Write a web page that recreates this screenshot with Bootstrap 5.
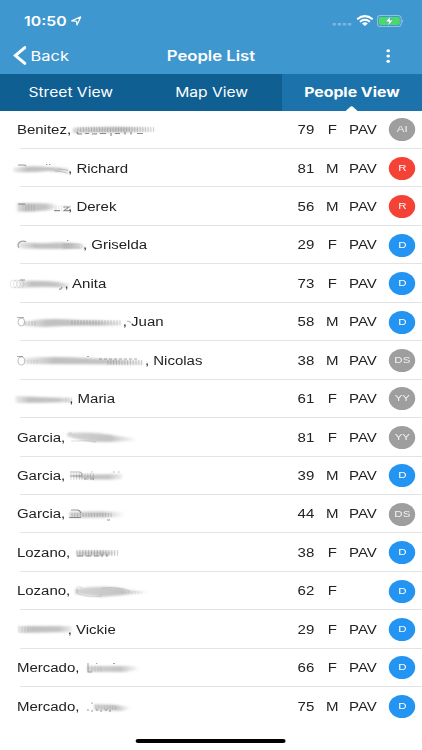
<!DOCTYPE html>
<html lang="en">
<head>
<meta charset="utf-8">
<meta name="viewport" content="width=device-width, initial-scale=1">
<title>People List</title>
<link href="https://cdn.jsdelivr.net/npm/bootstrap@5.3.0/dist/css/bootstrap.min.css" rel="stylesheet">
<style>
html, body { height: 750px; overflow: hidden; background: #fff; }
/* the whole screen is 1.2 times wider than its natural proportions */
.screen { width: 351.667px; height: 750px; transform: scaleX(1.2); transform-origin: 0 0; font-family: "Liberation Sans", Arial, sans-serif; color: #222; position: relative; }
.ui-font { font-family: Inter, "Liberation Sans", sans-serif; color: #fff; }
.top-area { background: #3f97cf; height: 74px; }
.status-bar { height: 37px; padding: 4px 14.6px 0 20px; }
.clock { font-size: 13.2px; font-weight: 600; line-height: 34px; }
.status-bar .locate { margin-left: 3.6px; }
.status-bar .wifi, .status-bar .battery { margin-left: 3.6px; }
.title-bar { height: 37px; display: grid; grid-template-columns: 1fr auto 1fr; }
.title-bar .back-link { font-size: 13.7px; padding-left: 10.5px; color: #fff; }
.title-bar .back-link span, .title-bar .heading { padding-top: 1px; }
.title-bar .heading { font-size: 13.9px; font-weight: 600; }
.title-bar .more { margin-right: 25.2px; }
.tabs-bar { height: 36.6px; background: #0f5f92; }
.tabs-bar .tab-item { flex: 1 1 0; font-size: 13px; color: #fff; line-height: 37.6px; text-align: center; position: relative; padding-left: .5px; }
.tabs-bar .tab-item.current { background: #1c72aa; font-weight: 700; font-size: 13.2px; padding-left: 0; }
.tab-item .pointer { position: absolute; left: 50%; bottom: 0; margin-left: -5px; width: 10px; height: 5px; display: block; }
.person { height: 38.45px; font-size: 12.5px; line-height: 37.4px; position: relative; padding-left: 14.1px; padding-right: 5.3px; }
.person::after { content: ""; position: absolute; left: 17px; right: 0; bottom: 0; height: 1px; background: #e3e3e5; }
.person:last-child::after { display: none; }
.person .who { white-space: pre; }
.person .who, .person .age, .person .sex, .person .vote { padding-top: 2px; }
.person .age { width: 20.2px; }
.person .sex { width: 17.6px; text-align: center; }
.person .vote { width: 33.4px; text-align: center; }
.party { width: 22.2px; height: 23px; border-radius: 50%; font-size: 9.6px; line-height: 22.4px; text-align: center; color: #fff; margin-left: 5px; }
.party-d { background: #2394f2; } .party-r { background: #f44336; } .party-n { background: #9e9e9e; color: #f2f2f2; }
.smudge { position: absolute; left: 0; top: 7.5px; width: 175px; height: 24px; }
.home-bar { position: absolute; left: 113.3px; top: 739px; width: 125px; height: 4px; border-radius: 3px; background: #000; }
</style>
<script src="https://cdn.jsdelivr.net/npm/bootstrap@5.3.0/dist/js/bootstrap.bundle.min.js"></script>
</head>
<body>
<svg width="0" height="0" class="position-absolute" aria-hidden="true">
<defs>
<linearGradient id="gMid"><stop offset="0" stop-color="#bbb" stop-opacity=".3"/><stop offset=".25" stop-color="#b5b5b5" stop-opacity=".85"/><stop offset=".75" stop-color="#b5b5b5" stop-opacity=".8"/><stop offset="1" stop-color="#bbb" stop-opacity=".25"/></linearGradient>
<linearGradient id="gOut"><stop offset="0" stop-color="#b0b0b0" stop-opacity=".55"/><stop offset=".6" stop-color="#aaa" stop-opacity=".7"/><stop offset="1" stop-color="#bbb" stop-opacity="0"/></linearGradient>
<filter id="soft" x="-10%" y="-50%" width="120%" height="200%"><feGaussianBlur stdDeviation=".9"/></filter>
<filter id="fine" x="-10%" y="-50%" width="120%" height="200%"><feGaussianBlur stdDeviation=".4"/></filter>
</defs>
</svg>
<div class="screen d-flex flex-column">
<header class="top-area ui-font">
<div class="status-bar d-flex align-items-center">
<span class="clock">10:50</span>
<svg class="locate" width="9.3" height="10" viewBox="0 0 12 11" preserveAspectRatio="none"><path d="M1 5.3L10.7 1 6.6 9.8 6.1 5.8Z" fill="none" stroke="#fff" stroke-width="1.3" stroke-linejoin="round"/></svg>
<svg class="ms-auto" width="16" height="14" viewBox="0 0 19 14" preserveAspectRatio="none"><g fill="#7db7df"><rect x="0" y="9" width="3.4" height="2.6" rx=".6"/><rect x="5.2" y="9" width="3.4" height="2.6" rx=".6"/><rect x="10.3" y="9" width="3.4" height="2.6" rx=".6"/><rect x="15.4" y="9" width="3.4" height="2.6" rx=".6"/></g></svg>
<svg class="wifi" width="14.2" height="11" viewBox="0 0 17 11" preserveAspectRatio="none"><g fill="none" stroke="#fff" stroke-width="2"><path d="M.7 4.2Q8.5-2 16.3 4.2"/><path d="M3.5 6.8Q8.5 2.8 13.5 6.8"/></g><path d="M5.6 8.4Q8.5 6.3 11.4 8.4L8.5 10.9Z" fill="#fff"/></svg>
<svg class="battery" width="22.7" height="12" viewBox="0 0 27 12" preserveAspectRatio="none"><rect x=".6" y=".6" width="23.6" height="10.8" rx="3" fill="none" stroke="#8fc2e4"/><rect x="2" y="2" width="20.8" height="8" rx="1.8" fill="#4cd964"/><path d="M25.3 4.2Q27 5.9 25.3 7.8Z" fill="#b8daef"/><path d="M13.6.9L8.4 6.8H11.7L10.8 11 16.4 5H13Z" fill="#fff" stroke="#3f97cf" stroke-width=".6"/></svg>
</div>
<div class="title-bar align-items-center">
<a href="#" class="back-link d-flex align-items-center text-decoration-none"><svg width="11" height="19" viewBox="0 0 13 19" preserveAspectRatio="none" class="me-1"><path d="M11.5 1.6L2 9.5l9.5 7.9" fill="none" stroke="#fff" stroke-width="3" stroke-linecap="round" stroke-linejoin="miter"/></svg><span>Back</span></a>
<span class="heading">People List</span>
<svg class="more ms-auto" width="5" height="14" viewBox="0 0 6 14" preserveAspectRatio="none"><g fill="#fff"><ellipse cx="3" cy="1.7" rx="1.8" ry="1.5"/><ellipse cx="3" cy="7" rx="1.8" ry="1.5"/><ellipse cx="3" cy="12.3" rx="1.8" ry="1.5"/></g></svg>
</div>
</header>
<nav class="tabs-bar ui-font d-flex">
<div class="tab-item">Street View</div>
<div class="tab-item">Map View</div>
<div class="tab-item current">People View<svg class="pointer" viewBox="0 0 12 5" preserveAspectRatio="none"><path d="M0 5L5 .6Q6-.2 7 .6L12 5Z" fill="#fff"/></svg></div>
</nav>
<main id="people"></main>
<div class="home-bar"></div>
</div>
<script>
// smudge artwork uses screen x and y measured from the middle of its row
const band = (d, g = 'gMid') => `<path d="${d}" fill="url(#${g})" filter="url(#soft)"/>`;
const ink = (d, o = .6, w = 1) => `<path d="${d}" fill="none" stroke="#333" stroke-opacity="${o * .85}" stroke-width="${w}" filter="url(#fine)"/>`;
const comb = (x0, x1, y0, y1, step, o = .35) => { let s = ''; for (let x = x0; x < x1; x += step) s += `M${x} ${y0}V${y1}`; return ink(s, o * .8, .9); };
const loops = (x0, x1, y, rx, ry, step, o) => { let s = ''; for (let x = x0; x < x1; x += step) s += `M${x} ${y}a${rx} ${ry} 0 1 0 ${2 * rx} 0a${rx} ${ry} 0 1 0 ${-2 * rx} 0`; return ink(s, o * .7, .8); };
const marks = {
 a: band('M73-2Q90-4 146-3L159 0 150 2Q110 3 73 3Z','gOut') + comb(78,155,-3,2,2.7,.35) + ink('M77 2q0 2 2 2h3M85 3.5h4M92 4h5M100 3.5h6M111 3v3M115 3.5h5M125 2v2.5M131 2v2.5M137 3.5h6',.65,1.2),
 b: band('M13-1Q30-4 48-2L68-1Q71 2 69 4L48 2Q30 4 14 3Z') + ink('M18-4h6q2 0 2 1.3M46-4.5h1.3M49-4.5h1.3',.6,1.1) + ink('M55 2q6 0 13 2.5M58 0q6 0 10 1.5',.25),
 c: band('M16-4Q40-4 54-3L56 2 50 3Q34 5 17 5Z') + ink('M18-3h7M54 3.6h6M63 0h6l-5 3.6h5',.6,1.1) + comb(56,70,-2,4,2.8,.2) + comb(20,36,-3,4,2.8,.12),
 d: band('M18-3Q40-1 57-2.5Q80-3 84 0L86 4Q55 4 19 3.5Z') + ink('M26-3.3q-4-2-7 1q-2 3 0 5M67-4.5h1.3',.6) + loops(62,80,1,1.8,2.5,2,.16),
 e: band('M19-3Q42-4 58-2L70 0 67 4Q45 2 20 4Z') + loops(10,20,0,3.5,4,3.4,.25) + ink('M20-4h5M59 5q2 1 3-2',.6),
 f: band('M23 0Q42-5 80-2L121-1 120 4Q70 3 43 5L24 4Z') + loops(18,20,0,3.4,3.9,4.5,.65) + comb(26,36,-1,4,3,.3) + comb(72,121,-2,3,3,.3) + ink('M17-4.5h7M127-.5q1-1 2 0l2 1',.45),
 g: band('M24-3Q55-5 86-3L143 0 143 4Q90 3 25 3Z') + loops(18,20,0,3.4,4,5,.65) + comb(28,38,-1,3,3,.15) + comb(108,143,-1,4,2.8,.35) + ink('M17-4.5h6M87-4.5h2M99-2h3M104-2h3M109-2h3M114-2h3M119-2h3M124-2h3M129-2h3M134-2h3',.5),
 h: band('M15-3Q36-2 70-1L73 3Q43 4 16 4Z') + ink('M16-4h9M58-4h1.5',.5) + comb(66,74,-2,4,2.8,.25),
 i: band('M67-5Q95-7 117-2Q130-1 140 2Q120 4 96 4Q78 2 67-2Z','gOut') + ink('M69-5h3M71 3h5q10-1 20 1',.2),
 j: band('M69-1L122-2 122 3Q95 4 88 3L72 1Z') + comb(71,94,-3,4,2.8,.3) + ink('M70-4h9q3 0 3 3M70 0h12M91-4h1.5M113-4h1.5M118-4h1.5M84 3h3M91 3h3',.45),
 k: band('M69-2Q98-3 125-2L124 3 70 4Z','gOut') + comb(72,112,-1,3,2.8,.3) + ink('M71-4h6q3 0 4 3M69 3.6h12M107 6h3',.6),
 l: band('M76-2Q100-3 122-1L110 2 77 3Z','gOut') + comb(77,119,-3,3,2.9,.4) + ink('M77 3h6M86 3h5M94 3h5M102 1v3M107 1v3',.6,1.1),
 m: band('M75-2Q108-7 129-1L152 1Q126 4 101 6Q84 4 75 3Z','gOut') + ink('M77-4.5v7M78-4.5q3 0 5 2M78 3q11 4 24 2M102-3q15-2 28 3',.15) + comb(123,144,0,3,3,.15),
 n: band('M18-4L70-4Q75-1 70 2L19 3Z') + comb(19,31,-4,3,3,.25) + ink('M18 3h2M22 3h1.5M26 3h1.5M30 3h1.5M34 3h1.5M38 3h1.5M42 3h1.5M46 3h1.5M50 3h1.5M54 3h1.5M58 3h1.5M62 3h1.5M66 3h1.5',.8,1.4),
 o: band('M87-2Q107-2 132-2L142 1 125 4 88 4Z','gOut') + comb(92,102,-2,4,3,.15) + ink('M88-5v9h4M96-4.5h1.3M113-4.5h2',.55),
 p: band('M94-3Q113-3 132 0L123 4 94 3Z','gOut') + comb(96,118,-2,3,2.8,.18) + ink('M92-4.5v1.5M87 3h2M91 4h2M96 3h2M100 4h2M105 3h2M109 4h2',.6)
};
const people = [
 ['Benitez,',0,79,'F','PAV','AI','a'], [', Richard',51.2,81,'M','PAV','R','b'], [', Derek',51.2,56,'M','PAV','R','c'],
 [', Griselda',66,29,'F','PAV','D','d'], [', Anita',47.7,73,'F','PAV','D','e'], [', Juan',105.8,58,'M','PAV','D','f'],
 [', Nicolas',128,38,'M','PAV','DS','g'], [', Maria',52.3,61,'F','PAV','YY','h'], ['Garcia,',0,81,'F','PAV','YY','i'],
 ['Garcia,',0,39,'M','PAV','D','j'], ['Garcia,',0,44,'M','PAV','DS','k'], ['Lozano,',0,38,'F','PAV','D','l'],
 ['Lozano,',0,62,'F','','D','m'], [', Vickie',50.8,29,'F','PAV','D','n'], ['Mercado,',0,66,'F','PAV','D','o'], ['Mercado,',0,75,'M','PAV','D','p']
];
document.getElementById('people').innerHTML = people.map(([n, gap, age, sex, vote, party, m]) =>
 `<div class="person d-flex align-items-center"><span class="who flex-grow-1" style="padding-left:${gap / 1.2}px">${n}</span><svg class="smudge" viewBox="0 -12 210 24" preserveAspectRatio="none">${marks[m]}</svg><span class="age">${age}</span><span class="sex">${sex}</span><span class="vote">${vote}</span><span class="party party-${party === 'D' ? 'd' : party === 'R' ? 'r' : 'n'}">${party}</span></div>`).join('');
</script>
</body>
</html>
